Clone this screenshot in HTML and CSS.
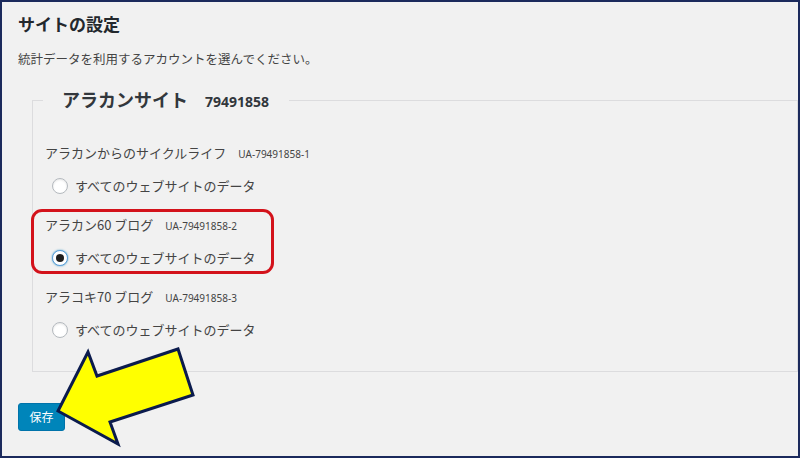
FILE: index.html
```html
<!DOCTYPE html>
<html lang="ja">
<head>
<meta charset="utf-8">
<title>サイトの設定</title>
<link rel="stylesheet" href="styles.css">
</head>
<body>
<div class="frame">
  <h1 class="title">サイトの設定</h1>
  <p class="desc">統計データを利用するアカウントを選んでください。</p>
  <fieldset class="site">
    <legend class="site-legend"><span class="site-name">アラカンサイト</span><span class="site-id">79491858</span></legend>
    <div class="account">
      <div class="acc-label">アラカンからのサイクルライフ<span class="ua">UA-79491858-1</span></div>
      <label class="radio-row"><span class="radio"></span><span class="radio-text">すべてのウェブサイトのデータ</span></label>
    </div>
    <div class="account">
      <div class="acc-label">アラカン60 ブログ<span class="ua">UA-79491858-2</span></div>
      <label class="radio-row"><span class="radio checked"></span><span class="radio-text">すべてのウェブサイトのデータ</span></label>
    </div>
    <div class="account">
      <div class="acc-label">アラコキ70 ブログ<span class="ua">UA-79491858-3</span></div>
      <label class="radio-row"><span class="radio"></span><span class="radio-text">すべてのウェブサイトのデータ</span></label>
    </div>
  </fieldset>
  <button class="save" type="button">保存</button>

  <div class="highlight"></div>
  <svg class="arrow" width="150" height="106" viewBox="52 345 150 106" xmlns="http://www.w3.org/2000/svg">
    <polygon points="58,411 88,352 97,376 178,349 193,395 110,422 118,444" fill="#ffff00" stroke="#0b1b4d" stroke-width="3" stroke-linejoin="miter"/>
  </svg>
</div>
</body>
</html>
```
FILE: styles.css
```css
html, body {
  margin: 0;
  padding: 0;
}
body {
  font-family: "Noto Sans CJK JP", "Noto Sans", sans-serif;
  color: #23282d;
  background: #f1f1f1;
}
.frame {
  position: relative;
  box-sizing: border-box;
  width: 800px;
  height: 458px;
  border: 2px solid #1b2a5c;
  background: #f1f1f1;
  padding: 0 0 0 16px;
  overflow: hidden;
}
.title {
  margin: 0;
  padding-top: 10px;
  font-size: 17px;
  line-height: 24px;
  font-weight: 700;
  color: #23282d;
}
.desc {
  margin: 13px 0 0;
  font-size: 12.5px;
  line-height: 20px;
  color: #444;
}
.site {
  margin: 16px 0 0 14px;
  border: 1px solid #dcdcde;
  padding: 27px 0 31px 12px;
  min-width: 0;
}
.site-legend {
  margin-left: -2px;
  padding: 0 20px 0 19px;
  line-height: 28px;
  font-weight: 700;
  color: #32373c;
}
.site-name {
  font-size: 18px;
}
.site-id {
  font-family: "Noto Sans", "Noto Sans CJK JP", sans-serif;
  font-size: 14px;
  margin-left: 17px;
}
.account + .account {
  margin-top: 19px;
}
.acc-label {
  height: 20px;
  line-height: 20px;
  font-size: 13px;
  color: #444;
}
.ua {
  font-family: "Noto Sans", sans-serif;
  font-size: 10px;
  color: #444;
  margin-left: 12px;
}
.radio-row {
  display: flex;
  align-items: center;
  height: 20px;
  margin-top: 13px;
  padding-left: 7px;
}
.radio {
  position: relative;
  box-sizing: border-box;
  width: 16px;
  height: 16px;
  border-radius: 50%;
  border: 1px solid #b4b9be;
  background: #fff;
  box-shadow: inset 0 1px 2px rgba(0, 0, 0, 0.1);
  flex: none;
}
.radio.checked {
  border-color: #5b9dd9;
  box-shadow: 0 0 2px rgba(30, 140, 190, 0.8);
}
.radio.checked::before {
  content: "";
  position: absolute;
  left: 3px;
  top: 3px;
  width: 8px;
  height: 8px;
  border-radius: 50%;
  background: #1e1e1e;
}
.radio-text {
  margin-left: 7px;
  font-size: 13px;
  line-height: 20px;
  color: #444;
}
.save {
  display: block;
  margin: 31px 0 0;
  width: 47px;
  height: 28px;
  padding: 0;
  border: 1px solid #0073aa;
  border-radius: 3px;
  background: #0085ba;
  color: #fff;
  font-family: "Noto Sans CJK JP", sans-serif;
  font-size: 12px;
  line-height: 26px;
  text-align: center;
}
.highlight {
  position: absolute;
  left: 29px;
  top: 207px;
  width: 243px;
  height: 65px;
  box-sizing: border-box;
  border: 3px solid #d3121b;
  border-radius: 11px;
}
.arrow {
  position: absolute;
  left: 50px;
  top: 343px;
}
```
